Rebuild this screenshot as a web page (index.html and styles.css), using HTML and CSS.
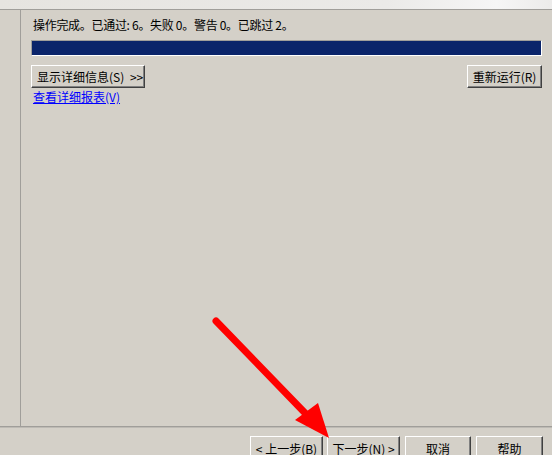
FILE: index.html
```html
<!DOCTYPE html>
<html lang="zh-CN">
<head>
    <meta charset="UTF-8">
    <title>验证配置向导</title>
    <link rel="stylesheet" href="styles.css">
</head>
<body>
    <div class="top-strip"></div>

    <div class="main">
        <div class="side"></div>
        <div class="content">
            <p class="status">操作完成。已通过: 6。失败 0。警告 0。已跳过 2。</p>
            <div class="progress"></div>
            <div class="actions">
                <button class="btn btn-details">显示详细信息(S) &gt;&gt;</button>
                <button class="btn btn-rerun">重新运行(R)</button>
            </div>
            <a class="report-link" href="#">查看详细报表(V)</a>
        </div>
    </div>

    <div class="footer">
        <button class="btn btn-nav">&lt; 上一步(B)</button>
        <button class="btn btn-nav btn-next">下一步(N) &gt;</button>
        <button class="btn btn-nav btn-gap">取消</button>
        <button class="btn btn-nav btn-help">帮助</button>
    </div>

    <!-- red annotation arrow pointing at the next button -->
    <svg class="arrow" width="552" height="455" viewBox="0 0 552 455">
        <line x1="216" y1="321" x2="306" y2="414" stroke="#ff0000" stroke-width="7" stroke-linecap="round"/>
        <polygon points="295,420 318,403 329,438" fill="#ff0000"/>
    </svg>
</body>
</html>
```

FILE: styles.css
```css
body {
    margin: 0;
    width: 552px;
    height: 455px;
    overflow: hidden;
    background-color: #d4d0c8;
    font-family: "Noto Sans CJK SC", "DejaVu Sans", sans-serif;
    font-size: 12px;
    color: #000;
    position: relative;
}

.top-strip {
    height: 9px;
    background: linear-gradient(90deg, #e6e4e0 0%, #ebeae8 70%, #f6f6f6 90%, #ecebea 100%);
    border-bottom: 1px solid #a09e9a;
}

.main {
    display: flex;
    height: 416px;
}

.side {
    width: 20px;
    border-right: 1px solid #a09e9a;
}

.content {
    flex: 1;
    padding: 0 10px 0 10px;
}

.status {
    margin: 5px 0 0 2px;
    height: 20px;
    line-height: 20px;
    font-size: 12px;
    letter-spacing: -0.3px;
    white-space: nowrap;
}

.progress {
    margin-top: 5px;
    height: 14px;
    border-top: 1px solid #a09e9a;
    border-left: 1px solid #a09e9a;
    border-bottom: 1px solid #ffffff;
    border-right: 1px solid #ffffff;
    background-color: #0a246a;
}

.actions {
    display: flex;
    justify-content: space-between;
    margin-top: 9px;
}

.btn {
    font-family: "Noto Sans CJK SC", "DejaVu Sans", sans-serif;
    font-size: 12px;
    color: #000;
    background-color: #d4d0c8;
    border-top: 1px solid #ffffff;
    border-left: 1px solid #ffffff;
    border-bottom: 1px solid #404040;
    border-right: 1px solid #404040;
    box-shadow: inset -1px -1px 0 #808080;
    height: 23px;
    padding: 0 2px;
    line-height: 19px;
    white-space: nowrap;
}

.btn-details {
    width: 114px;
    padding-left: 5px;
    text-align: left;
    word-spacing: 3px;
}

.btn-rerun {
    width: 75px;
}

.report-link {
    display: inline-block;
    margin: 1px 0 0 2px;
    color: #0000ff;
    font-size: 12px;
    line-height: 14px;
    white-space: nowrap;
}

.footer {
    border-top: 1px solid #a09e9a;
    box-shadow: inset 0 1px 0 #bdbab4;
    display: flex;
    justify-content: flex-end;
    padding: 9px 9px 0 0;
    height: 38px;
}

.btn-nav {
    width: 73px;
    height: 25px;
}

.btn-next {
    margin-left: 4px;
}

.btn-gap {
    margin-left: 5px;
    margin-right: 5px;
    width: 66px;
}

.btn-help {
    width: 67px;
}

.arrow {
    position: absolute;
    left: 0;
    top: 0;
    pointer-events: none;
}
```
